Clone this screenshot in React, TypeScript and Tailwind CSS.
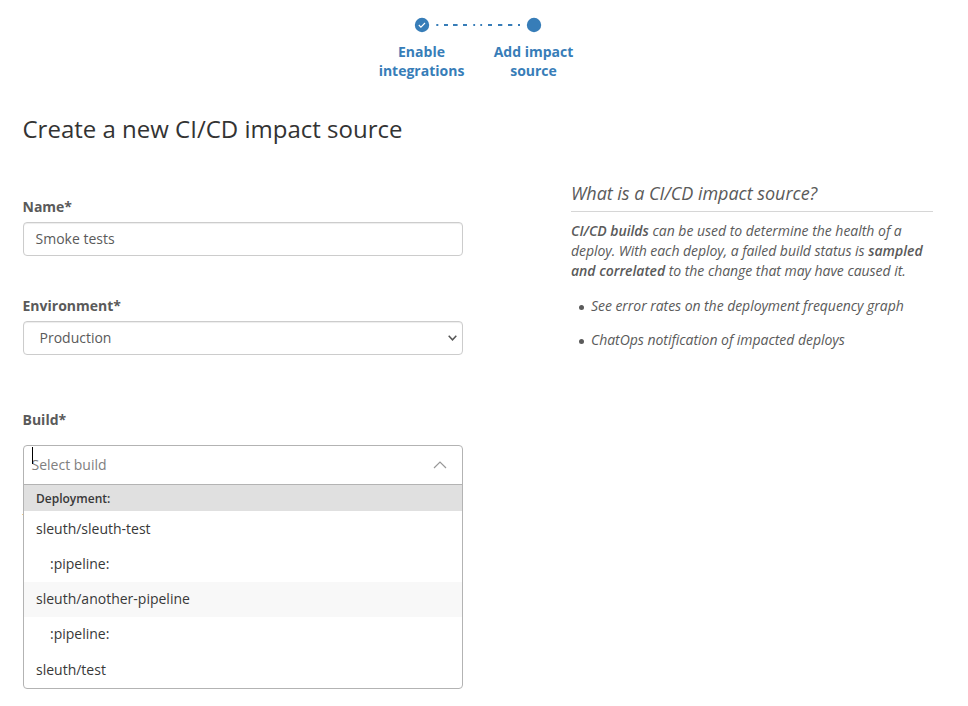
export default function App() {
  const label = "-ml-[0.5px] text-[14px] leading-[20px] font-bold text-[#5a5a5a]";
  return (
    <main className="h-[706px] w-[968px] overflow-hidden bg-white font-['Open_Sans',sans-serif] text-[14px] leading-[20px] text-[#5a5a5a]">
      <header className="flex h-[80px] justify-center pt-[17px] pr-[13px] font-bold text-[#377db8]">
        <div className="flex w-[112px] flex-col items-center">
          <svg className="h-4 w-4" viewBox="0 0 16 16"><circle cx="8" cy="8" r="7.2" fill="#377db8" /><path d="m4.8 8 2.1 2.1 4.1-4.1" fill="none" stroke="white" strokeWidth="1.1" /></svg>
          <p className="mt-[9px] text-center leading-[19px]">Enable<br />integrations</p>
        </div>
        <svg className="-mx-12 h-4 w-24 shrink-0" viewBox="0 0 96 16"><path d="M6.3 8h2M14 8h4M23 8h4.6M33 8h4M43.3 8h1.8M50.3 8h1.8M58 8h4M68 8h4.3M78 8h4.3M88 8h2" stroke="#377db8" strokeWidth="2" /></svg>
        <div className="flex w-[112px] flex-col items-center">
          <svg className="h-4 w-4" viewBox="0 0 16 16"><circle cx="8" cy="8" r="7.2" fill="#377db8" /></svg>
          <p className="mt-[9px] text-center leading-[19px]">Add impact<br />source</p>
        </div>
      </header>
      <h1 className="mt-[33px] ml-[22.5px] text-[24px] leading-[32px] text-[#333]">Create a new CI/CD impact source</h1>
      <div className="flex pl-[23px]">
        <form className="w-[440px] shrink-0 pt-[52px]">
          <div className={label}>Name*</div>
          <div className="mt-[5px] flex h-[34px] items-center rounded-[4px] border border-[#ccc] px-[11.5px] shadow-[inset_0_1px_1px_rgba(0,0,0,0.075)]">Smoke tests</div>
          <div className={label + " mt-[40px]"}>Environment*</div>
          <div className="mt-[5px] flex h-[34px] items-center justify-between rounded-[4px] border border-[#ccc] pr-[5px] pl-[15.5px] shadow-[inset_0_1px_1px_rgba(0,0,0,0.075)]">
            Production<svg width="9" height="6" viewBox="0 0 9 6"><path d="m.7.8 3.8 4 3.8-4" fill="none" stroke="#555" strokeWidth="1.5" /></svg>
          </div>
          <div className={label + " mt-[55px]"}>Build*</div>
          <div className="relative mt-[15px]">
            <span className="absolute top-[69px] -left-px h-px w-[2px] bg-[#f5cf8a]" />
            <div className="relative h-[244px] overflow-hidden rounded-[4px] border border-[#b3b3b3] bg-white text-[#383838]">
              <div className="relative flex h-[39px] items-center justify-between border-b border-[#b3b3b3] pr-[15px] pl-[7.5px] text-[#808080]">
                <span>Select build</span><span className="absolute top-[1px] left-[8px] h-[17px] w-px bg-black" />
                <svg width="14" height="8" viewBox="0 0 14 8"><path d="m1 7 6-6 6 6" fill="none" stroke="#999" strokeWidth="1.2" /></svg>
              </div>
              <div className="flex h-[26px] items-center bg-[#e0e0e0] px-3 pt-px text-[12px] font-semibold">Deployment:</div>
              <div className="flex h-[36px] items-center px-3">sleuth/sleuth-test</div>
              <div className="flex h-[35px] items-center px-[26px] pb-[2px]">:pipeline:</div>
              <div className="flex h-[35px] items-center bg-[#f8f8f8] px-3 pb-[2px]">sleuth/another-pipeline</div>
              <div className="flex h-[35px] items-center px-[26px] pb-[2px]">:pipeline:</div>
              <div className="flex h-[36px] items-center px-3">sleuth/test</div>
            </div>
          </div>
        </form>
        <aside className="mt-[36px] ml-[108px] w-[362px] italic">
          <h2 className="border-b border-[#d6d6d6] pb-[6px] text-[18px] leading-[24px] tracking-[-0.03px]">What is a CI/CD impact source?</h2>
          <p className="mt-[9px] tracking-[-0.02px]"><b className="font-semibold">CI/CD builds</b> can be used to determine the health of a<br /><span className="tracking-[-0.05px]">deploy. With each deploy, a failed build status is</span> <b className="font-semibold">sampled<br />and correlated</b> <span className="tracking-[-0.04px]">to the change that may have caused it.</span></p>
          <ul className="mt-[15px] space-y-[14px]">
            <li className="flex items-center tracking-[-0.05px]"><span className="mt-[2px] mr-[7px] ml-[8px] h-[5px] w-[5px] rounded-full bg-[#5a5a5a]" />See error rates on the deployment frequency graph</li>
            <li className="flex items-center tracking-[-0.03px]"><span className="mt-[2px] mr-[7px] ml-[8px] h-[5px] w-[5px] rounded-full bg-[#5a5a5a]" />ChatOps notification of impacted deploys</li>
          </ul>
        </aside>
      </div>
    </main>
  );
}
